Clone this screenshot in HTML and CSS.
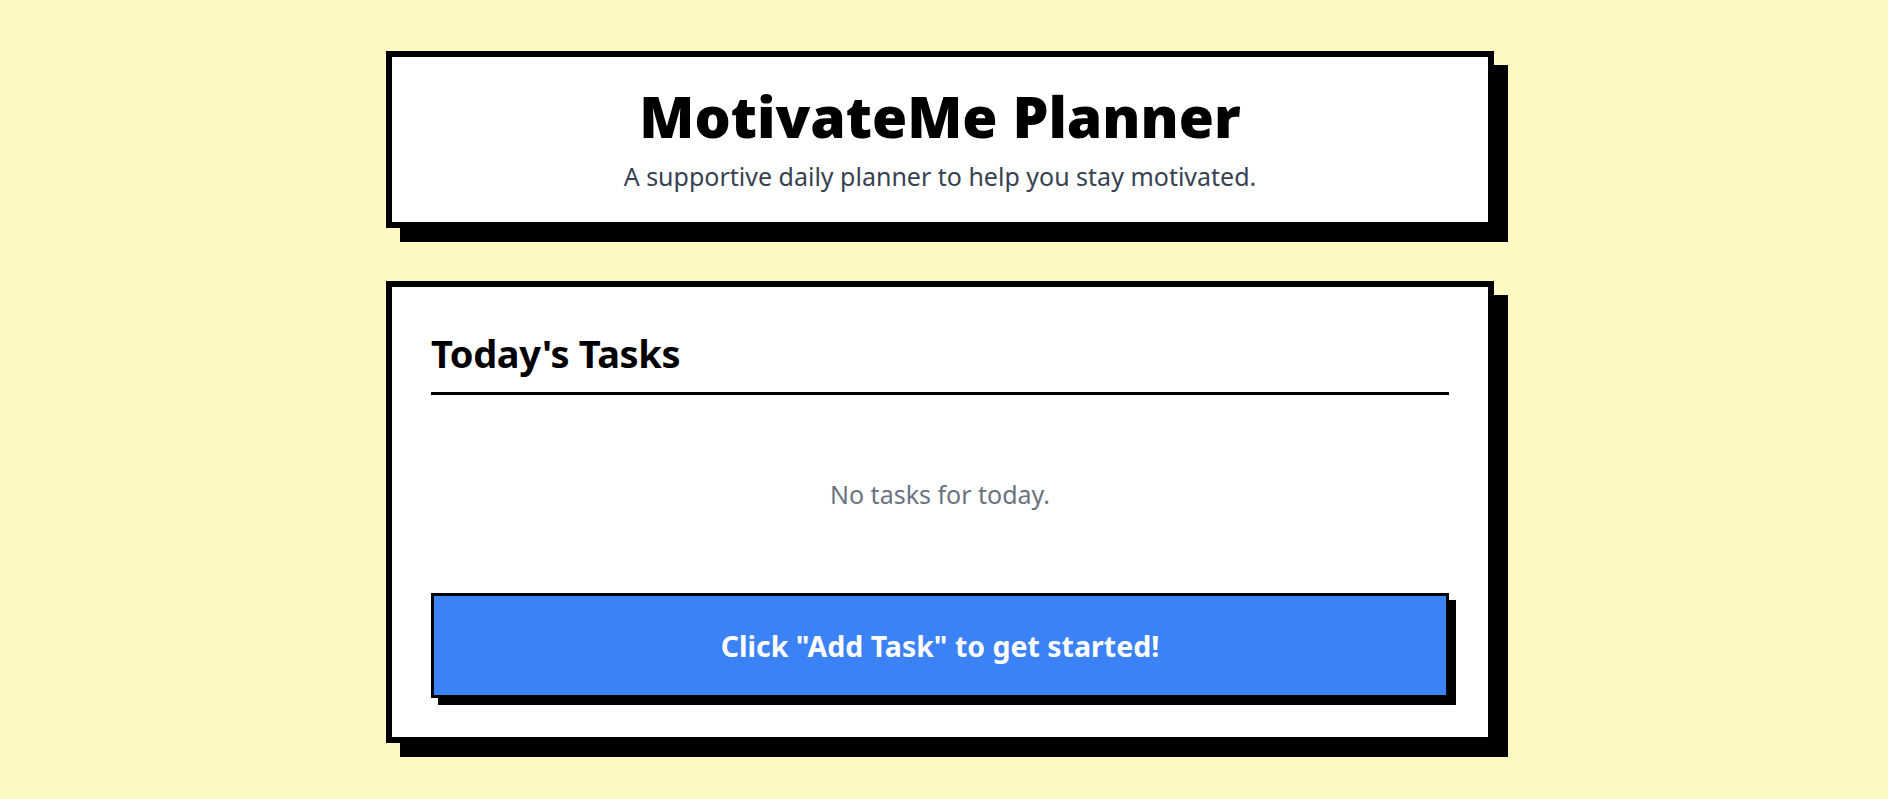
FILE: index.html
```html
<!DOCTYPE html>
<html lang="en">
<head>
<meta charset="utf-8">
<title>MotivateMe Planner</title>
<link rel="stylesheet" href="styles.css">
</head>
<body>
<main class="page">
  <header class="card header-card">
    <h1 class="title">MotivateMe Planner</h1>
    <p class="subtitle">A supportive daily planner to help you stay motivated.</p>
  </header>
  <section class="card tasks-card">
    <h2 class="tasks-heading">Today's Tasks</h2>
    <p class="empty">No tasks for today.</p>
    <button class="add-btn" type="button">Click "Add Task" to get started!</button>
  </section>
</main>
</body>
</html>
```

FILE: styles.css
```css
* { box-sizing: border-box; }
html, body { margin: 0; padding: 0; }
body {
  background: #fef9c3;
  font-family: "Noto Sans", "Open Sans", sans-serif;
  color: #000;
  min-height: 799px;
}
.page {
  display: flex;
  flex-direction: column;
  align-items: center;
  gap: 53px;
  padding: 51px 8px 40px 0;
}
.card {
  width: 1108px;
  background: #fff;
  border: 6px solid #000;
  box-shadow: 14px 14px 0 #000;
}
.header-card {
  height: 177px;
  text-align: center;
  padding-top: 31px;
}
.title {
  margin: 0;
  font-size: 57px;
  line-height: 1;
  font-weight: 900;
}
.subtitle {
  margin: 14px 0 0;
  font-size: 25px;
  line-height: 1.4;
  color: #374151;
}
.tasks-card {
  height: 462px;
  padding: 39px 39px;
  display: flex;
  flex-direction: column;
}
.tasks-heading {
  margin: 0;
  font-size: 38px;
  line-height: 54px;
  font-weight: 700;
  letter-spacing: -0.4px;
  padding-bottom: 12px;
  border-bottom: 3px solid #000;
}
.empty {
  margin: 0;
  flex: 1;
  display: flex;
  align-items: center;
  justify-content: center;
  font-size: 25px;
  color: #6b7280;
}
.add-btn {
  width: 100%;
  height: 105px;
  background: #3b82f6;
  border: 3px solid #000;
  box-shadow: 7px 7px 0 #000;
  color: #fff;
  font-family: "Noto Sans", "Open Sans", sans-serif;
  font-size: 28.5px;
  font-weight: 700;
  padding: 0;
}
```
